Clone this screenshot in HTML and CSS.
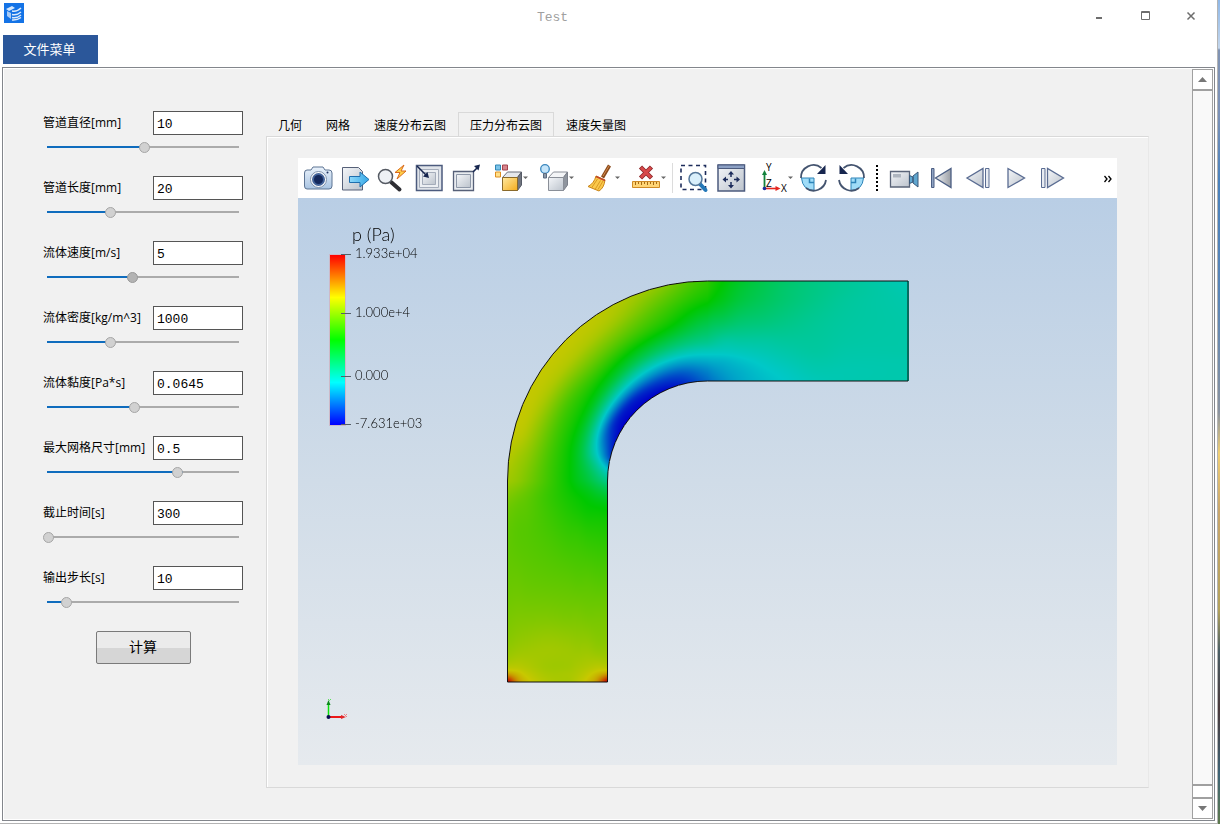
FILE: index.html
```html
<!DOCTYPE html>
<html lang="zh-CN">
<head>
<meta charset="utf-8">
<title>Test</title>
<link rel="stylesheet" href="styles.css">
</head>
<body>
<div class="window">
  <header class="titlebar">
    <svg class="app-icon" width="20" height="20" viewBox="0 0 20 20" aria-hidden="true">
      <rect width="20" height="20" fill="#1473e6"/>
      <path d="M2 6 8 3l3 2-6 3z" fill="#d4e6fb"/><path d="M3 8l4 2v6l-4-3z" fill="#a9cbf5"/>
      <path d="M8 8q5 1 9-3M8 11.500q5 1 9-2.500M8 14.500q5 1 9-2.500M8 17q5 .5 9-2.500" stroke="#dceafb" stroke-width="1.500" fill="none"/>
    </svg>
    <h1 class="title">Test</h1>
    <div class="window-buttons">
      <button class="window-button" type="button" aria-label="最小化"><svg width="12" height="12" viewBox="0 0 12 12"><path d="M3 8h6" stroke="#6d6d6d" stroke-width="2"/></svg></button>
      <button class="window-button" type="button" aria-label="最大化"><svg width="12" height="12" viewBox="0 0 12 12"><path d="M2.500 1.500h8v8h-8zM2 2.500h9" stroke="#6d6d6d" fill="none"/></svg></button>
      <button class="window-button" type="button" aria-label="关闭"><svg width="12" height="12" viewBox="0 0 12 12"><path d="m2.500 2.500 7 7m0-7-7 7" stroke="#6d6d6d" stroke-width="1.500"/></svg></button>
    </div>
  </header>
  <nav class="menubar"><button class="menu-button" type="button">文件菜单</button></nav>

  <div class="frame">
    <main class="content">
      <form class="params">
        <div class="param"><div class="param-head"><label for="p1">管道直径[mm]</label><input class="value" id="p1" type="text" value="10"></div><input class="slider" type="range" aria-label="管道直径" min="0" max="1000" value="509" style="--fill:50.9%"></div>
        <div class="param"><div class="param-head"><label for="p2">管道长度[mm]</label><input class="value" id="p2" type="text" value="20"></div><input class="slider" type="range" aria-label="管道长度" min="0" max="1000" value="329" style="--fill:32.9%"></div>
        <div class="param"><div class="param-head"><label for="p3">流体速度[m/s]</label><input class="value" id="p3" type="text" value="5"></div><input class="slider slider-active" type="range" aria-label="流体速度" min="0" max="1000" value="442" style="--fill:44.2%"></div>
        <div class="param"><div class="param-head"><label for="p4">流体密度[kg/m^3]</label><input class="value" id="p4" type="text" value="1000"></div><input class="slider" type="range" aria-label="流体密度" min="0" max="1000" value="329" style="--fill:32.9%"></div>
        <div class="param"><div class="param-head"><label for="p5">流体黏度[Pa*s]</label><input class="value" id="p5" type="text" value="0.0645"></div><input class="slider" type="range" aria-label="流体黏度" min="0" max="1000" value="456" style="--fill:45.6%"></div>
        <div class="param"><div class="param-head"><label for="p6">最大网格尺寸[mm]</label><input class="value" id="p6" type="text" value="0.5"></div><input class="slider" type="range" aria-label="最大网格尺寸" min="0" max="1000" value="680" style="--fill:68%"></div>
        <div class="param"><div class="param-head"><label for="p7">截止时间[s]</label><input class="value" id="p7" type="text" value="300"></div><input class="slider" type="range" aria-label="截止时间" min="0" max="1000" value="0" style="--fill:0%"></div>
        <div class="param"><div class="param-head"><label for="p8">输出步长[s]</label><input class="value" id="p8" type="text" value="10"></div><input class="slider" type="range" aria-label="输出步长" min="0" max="1000" value="95" style="--fill:9.5%"></div>
        <button class="compute" type="button">计算</button>
      </form>

      <section class="results">
        <div class="tabs" role="tablist">
          <button class="tab" type="button" role="tab">几何</button>
          <button class="tab" type="button" role="tab">网格</button>
          <button class="tab" type="button" role="tab">速度分布云图</button>
          <button class="tab tab-selected" type="button" role="tab" aria-selected="true">压力分布云图</button>
          <button class="tab" type="button" role="tab">速度矢量图</button>
        </div>
        <div class="pane">
          <div class="toolbar">
            <svg class="defs" width="0" height="0" aria-hidden="true">
              <defs>
                <linearGradient id="steel" x1="0" y1="0" x2="1" y2="1"><stop offset="0" stop-color="#f4f6f9"/><stop offset="1" stop-color="#bcc3cc"/></linearGradient>
                <linearGradient id="ice" x1="0" y1="0" x2="0" y2="1"><stop offset="0" stop-color="#eaf2fb"/><stop offset="1" stop-color="#a9c4e2"/></linearGradient>
                <linearGradient id="sky" x1="0" y1="0" x2="1" y2="0"><stop offset="0" stop-color="#8fd8fa"/><stop offset="1" stop-color="#35a8e6"/></linearGradient>
                <linearGradient id="gold" x1="0" y1="0" x2="1" y2="1"><stop offset="0" stop-color="#ffe9a0"/><stop offset="1" stop-color="#f5ac1c"/></linearGradient>
                <linearGradient id="grey" x1="0" y1="0" x2="1" y2="0"><stop offset="0" stop-color="#f2f3f5"/><stop offset="1" stop-color="#999da4"/></linearGradient>
              </defs>
            </svg>
            <button class="tool" type="button" aria-label="截图"><svg width="37" height="40" viewBox="0 0 37 40">
              <path d="M8 12h4l2-3h10l2 3h4q3 0 3 3v13q0 3-3 3H8q-2.500 0-2.500-3V15q0-3 2.500-3z" fill="url(#ice)" stroke="#5d7493"/>
              <circle cx="19.500" cy="21.500" r="8" fill="#fff" stroke="#7d90ab"/><circle cx="19.500" cy="21.500" r="6.500" fill="#44649a"/><circle cx="19.500" cy="21.500" r="4.500" fill="#14285c"/><circle cx="28.500" cy="14.500" r="1" fill="#1b2f60"/></svg></button>
            <button class="tool" type="button" aria-label="导出"><svg width="37" height="40" viewBox="0 0 37 40">
              <path d="M6.500 9.500h16l4 4v18.500h-20z" fill="url(#steel)" stroke="#566078"/>
              <path d="M13.500 18.500H24v-4.500l9 7.500-9 7.500v-4.500H13.500z" fill="url(#sky)" stroke="#1f6fae"/></svg></button>
            <button class="tool" type="button" aria-label="快速查找"><svg width="37" height="40" viewBox="0 0 37 40">
              <path d="m18 24 8.500 7.500" stroke="#2d2d33" stroke-width="4" stroke-linecap="round"/>
              <circle cx="12.500" cy="18.500" r="7" fill="#eef1f5" stroke="#555a63" stroke-width="1.500"/>
              <path d="m31 7-9 7.500h5L24 21l9-8h-5z" fill="#ffd24a" stroke="#d9691c"/></svg></button>
            <button class="tool" type="button" aria-label="重置视图"><svg width="37" height="40" viewBox="0 0 37 40">
              <path d="M6.500 7.500h25.500v25H6.500z" fill="#dfe3e9" stroke="#4c5b7e" stroke-width="1.500"/>
              <path d="M9.500 11.500h19v18h-19z" fill="#eceff3" stroke="#a4acba"/><path d="M12.500 14.500h13v12h-13z" fill="url(#steel)" stroke="#a4acba"/>
              <path d="m7 8 9 9" stroke="#17264f" stroke-width="1.500"/><path d="m19 20-1.500-6-4.500 4.500z" fill="#17264f"/></svg></button>
            <button class="tool" type="button" aria-label="缩放到数据"><svg width="37" height="40" viewBox="0 0 37 40">
              <path d="M6.500 13.500h20v19h-20z" fill="#e9ecf0" stroke="#566078" stroke-width="1.300"/>
              <path d="M9.500 16.500h14v13h-14z" fill="url(#steel)" stroke="#8e98a8"/>
              <path d="m26 14 5-5" stroke="#17264f" stroke-width="1.600"/><path d="m33 6.500-6 1.500 4.500 4.500z" fill="#17264f"/></svg></button>
            <button class="tool tool-menu" type="button" aria-label="显示方块"><svg width="46" height="40" viewBox="0 0 46 40">
              <path d="M11.500 7h5v5h-5z" fill="#7cc3e8" stroke="#2f86b5"/><path d="M18.500 7h5v5h-5z" fill="#d6848c" stroke="#a3424c"/><path d="M11.500 14h5v5h-5z" fill="#ffe08a" stroke="#dd8d20"/>
              <path d="m18.500 19.500 5-5.500h14l-4 5.500z" fill="#e5e8ec" stroke="#6a6f7a"/><path d="m33.500 19.500 4-5.500v13l-4 5.500z" fill="#71757f" stroke="#555a66"/><path d="M18.500 19.500h15v13h-15z" fill="url(#gold)" stroke="#8a6a2a"/>
              <path d="M39 18.500h5L41.500 21z" fill="#666"/></svg></button>
            <button class="tool tool-menu" type="button" aria-label="光照"><svg width="46" height="40" viewBox="0 0 46 40">
              <path d="m18.500 19.500 5-5.500h14l-4 5.500z" fill="#f4f5f7" stroke="#8a8f98"/><path d="m33.500 19.500 4-5.500v13l-4 5.500z" fill="#8f959e" stroke="#7b808a"/><path d="M18.500 19.500h15v13h-15z" fill="url(#steel)" stroke="#8a8f98"/>
              <circle cx="15" cy="11" r="4.300" fill="#c5e5fa" stroke="#3a86bd" stroke-width="1.300"/><path d="M13.500 15.500h3V20h-3z" fill="#8c98a8" stroke="#5a6b80"/>
              <path d="M39 18.500h5L41.500 21z" fill="#666"/></svg></button>
            <button class="tool tool-menu" type="button" aria-label="清除"><svg width="46" height="40" viewBox="0 0 46 40">
              <path d="m33.500 7.500-7 12" stroke="#8a4b1d" stroke-width="3.500"/><path d="m33 8-6 10" stroke="#d68a4a"/>
              <path d="m20 18 9 4q-1 8-6 11l-11-4.500q6-3 8-10.500z" fill="#fbc94c" stroke="#c98518"/><path d="m21.500 21-6 9m9-7.500-5.500 9m8-8.500-5 8.500" stroke="#d99a24"/><path d="m20 18.500 9 4" stroke="#c2442a" stroke-width="1.500"/>
              <path d="M39 18.500h5L41.500 21z" fill="#666"/></svg></button>
            <button class="tool tool-menu" type="button" aria-label="删除标尺"><svg width="46" height="40" viewBox="0 0 46 40">
              <path d="m18.500 9 11 11m0-11-11 11" stroke="#8e2a2c" stroke-width="4.500"/><path d="m19 9.500 10 10m0-10-10 10" stroke="#d8494a" stroke-width="2.800"/>
              <path d="M10.500 23.500h27v6h-27z" fill="#ffd576" stroke="#cf8a25"/><path d="M13.500 24v3m3-3v2m3-2v3m3-3v2m3-2v3m3-3v2m3-2v3m3-3v2" stroke="#a56a14"/>
              <path d="M39 18.500h5L41.500 21z" fill="#666"/></svg></button>
            <span class="separator"></span>
            <button class="tool" type="button" aria-label="框选缩放"><svg width="37" height="40" viewBox="0 0 37 40">
              <path d="M7 7.500h24.500v24H7z" fill="none" stroke="#1d2c5b" stroke-width="1.600" stroke-dasharray="4 3.500"/>
              <path d="m26 26 5.500 6" stroke="#2478b8" stroke-width="4" stroke-linecap="round"/><circle cx="21.500" cy="21" r="6.500" fill="#d9effb" stroke="#54779a" stroke-width="1.500"/></svg></button>
            <button class="tool" type="button" aria-label="适应窗口"><svg width="37" height="40" viewBox="0 0 37 40">
              <path d="M7 7h26.500v26H7z" fill="url(#steel)" stroke="#4c5b7e" stroke-width="1.500"/><path d="M7 7h26.500v3.500H7z" fill="#8ca0c4" stroke="#4c5b7e"/>
              <path d="M20 15v4m0 5v4m-7-6.500h4m6 0h4" stroke="#1d2c5b" stroke-width="1.500"/><path d="m20 13-3 3.500h6zM20 30.500 17 27h6zM11.500 21.500 15 18.500v6zM29 21.500l-3.500-3v6z" fill="#1d2c5b"/></svg></button>
            <button class="tool tool-menu" type="button" aria-label="坐标轴视图"><svg width="46" height="40" viewBox="0 0 46 40">
              <path d="M16.500 30V15" stroke="#12823b" stroke-width="1.800"/><path d="m16.500 12-2.500 5h5z" fill="#12823b"/><path d="M17 30.500h12" stroke="#e52620" stroke-width="1.600"/><path d="m32.500 30.500-5-2.500v5z" fill="#e52620"/><circle cx="16.500" cy="30.500" r="1.800" fill="#1c2f9c"/>
              <text class="axis-letter" x="18" y="13">Y</text><text class="axis-letter" x="18" y="29">Z</text><text class="axis-letter" x="33" y="34">X</text>
              <path d="M40 18.500h5L42.500 21z" fill="#666"/></svg></button>
            <button class="tool" type="button" aria-label="顺时针旋转"><svg width="37" height="40" viewBox="0 0 37 40">
              <path d="M7.500 20H20v12.500Q8.500 32 7.500 20z" fill="#9fdcf8" stroke="#2e84b8"/><path d="M15.500 20.500v4H20" fill="none" stroke="#2e84b8" stroke-width="1.500"/>
              <path d="M27.500 10A12.500 12.500 0 0 0 7 20M12 30A12.500 12.500 0 0 0 32 22" fill="none" stroke="#44546f" stroke-width="1.800"/><path d="M31.500 7v9H23z" fill="#17264f"/></svg></button>
            <button class="tool" type="button" aria-label="逆时针旋转"><svg width="37" height="40" viewBox="0 0 37 40">
              <path d="M32.500 20H20v12.500Q31.500 32 32.500 20z" fill="#9fdcf8" stroke="#2e84b8"/><path d="M24.500 20.500v4H20" fill="none" stroke="#2e84b8" stroke-width="1.500"/>
              <path d="M12.500 10A12.500 12.500 0 0 1 33 20M28 30A12.500 12.500 0 0 1 8 22" fill="none" stroke="#44546f" stroke-width="1.800"/><path d="M8.500 7v9H17z" fill="#17264f"/></svg></button>
            <span class="grip"></span>
            <button class="tool" type="button" aria-label="录制"><svg width="37" height="40" viewBox="0 0 37 40">
              <path d="M6.500 13.500h19v15.500h-19z" fill="url(#steel)" stroke="#5a6478" stroke-width="1.300"/><path d="M9 16h8v3.500H9z" fill="#aeb5bf"/>
              <path d="M25.500 17.500 29 19v5l-3.500 1.500zM34 14v15l-5-4v-7z" fill="#5fa6cf" stroke="#3a5878"/></svg></button>
            <button class="tool" type="button" aria-label="第一帧"><svg width="37" height="40" viewBox="0 0 37 40">
              <path d="M10.500 10.500H13v19h-2.500z" fill="#8fa3c2" stroke="#4c5f84"/><path d="M30 10.500v19L14.500 20z" fill="url(#grey)" stroke="#4c5f84" stroke-width="1.300"/></svg></button>
            <button class="tool" type="button" aria-label="上一帧"><svg width="37" height="40" viewBox="0 0 37 40">
              <path d="M25 10.500v19L9 20z" fill="url(#steel)" stroke="#5a6c92" stroke-width="1.300"/><path d="M27.500 10.500H31v19h-3.500z" fill="#e8ecf2" stroke="#5a6c92"/></svg></button>
            <button class="tool" type="button" aria-label="播放"><svg width="37" height="40" viewBox="0 0 37 40">
              <path d="M13 10.500v19L29.500 20z" fill="url(#steel)" stroke="#5a6c92" stroke-width="1.300"/></svg></button>
            <button class="tool" type="button" aria-label="下一帧"><svg width="37" height="40" viewBox="0 0 37 40">
              <path d="M15.500 10.500v19l16-9.500z" fill="url(#steel)" stroke="#5a6c92" stroke-width="1.300"/><path d="M9.500 10.500H13v19H9.500z" fill="#e8ecf2" stroke="#5a6c92"/></svg></button>
            <button class="tool-overflow" type="button" aria-label="更多工具"><svg width="10" height="8" viewBox="0 0 10 8"><path d="m1.500 1 2.500 3-2.500 3M5.500 1 8 4 5.500 7" fill="none" stroke="#000" stroke-width="1.300"/></svg></button>
          </div>

          <div class="viewport">
            <canvas class="field" id="field" width="402" height="402"></canvas>
            <svg class="overlay" aria-label="压力分布 p (Pa)">
              <defs><linearGradient id="rainbow" x1="0" y1="0" x2="0" y2="1">
                <stop offset="0" stop-color="#f00"/><stop offset=".25" stop-color="#ff0"/><stop offset=".5" stop-color="#0f0"/><stop offset=".75" stop-color="#0ff"/><stop offset="1" stop-color="#00f"/>
              </linearGradient></defs>
              <path d="M209.500 484V283A200 200 0 0 1 409.500 83H610V183H409.500A100 100 0 0 0 309.500 283V484z" fill="none" stroke="#111"/>
              <rect x="31" y="56" width="17" height="172" fill="#cdb9c8"/>
              <rect x="32" y="57" width="15" height="170" fill="url(#rainbow)"/>
              <path d="M43 56.500h10M43 115.500h10M43 178.500h10M43 226.500h10" stroke="#555f69"/>
              <text class="legend-title" x="54" y="43">p (Pa)</text>
              <text class="legend-label" x="57" y="60">1.933e+04</text>
              <text class="legend-label" x="57" y="119">1.000e+4</text>
              <text class="legend-label" x="57" y="182">0.000</text>
              <text class="legend-label" x="57" y="230">-7.631e+03</text>
              <path d="M30.500 519v-13" stroke="#0be00b" stroke-width="1.500"/><path d="m30.500 502-2 5h4z" fill="#0a8a1a"/>
              <path d="M31 519h13" stroke="#e00" stroke-width="1.800"/><path d="m48 519-5-2v4z" fill="#e0272a"/>
              <circle cx="30.500" cy="519" r="2" fill="#0a0a50"/><path d="m46 516 3 3m0-3-3 3" stroke="#f08080"/><path d="m30 501 1.500 1.500L33 501" stroke="#5de05d" fill="none"/>
            </svg>
          </div>
        </div>
      </section>
    </main>
    <div class="scrollbar" aria-hidden="true">
      <div class="scroll-button"><svg width="9" height="5" viewBox="0 0 9 5"><path d="M0 5h9L4.500 0z" fill="#777"/></svg></div>
      <div class="scroll-track"></div>
      <div class="scroll-thumb"></div>
      <div class="scroll-button"><svg width="9" height="5" viewBox="0 0 9 5"><path d="M0 0h9L4.500 5z" fill="#777"/></svg></div>
    </div>
  </div>
</div>
<script src="field.js"></script>
</body>
</html>
```
FILE: styles.css
```css
* { box-sizing: border-box; }

body {
  margin: 0;
  min-height: 100vh;
  padding-right: 2px;
  display: flex;
  background: linear-gradient(#8fb8e8 0, #c3d6ec 48px, #8093b3 50px, #7c92b8 14%, #4a82bd 22%, #5a86b8 36%, #8a93a0 50%, #f0cf74 55%, #c9a66c 62%, #b3a25c 74%, #4b5f66 79%, #4b3a3c 86%, #3f6577 94%, #5e7a4c 100%);
  font-family: "Open Sans", "Noto Sans CJK SC", sans-serif;
  font-size: 12px;
  color: #000;
}

button, input {
  margin: 0;
  font: inherit;
  color: inherit;
}

.window {
  flex: 1;
  min-width: 0;
  display: flex;
  flex-direction: column;
  background: #fff;
  border-right: 1px solid #b4b4b4;
  border-bottom: 1px solid #b4b4b4;
}

/* Title bar and menu */
.titlebar {
  height: 35px;
  display: grid;
  grid-template-columns: 1fr auto 1fr;
  align-items: center;
}

.app-icon {
  align-self: start;
  margin: 3px 0 0 4px;
}

.title {
  margin: 0;
  padding-right: 112px;
  font: 13px "Liberation Mono", monospace;
  color: #a0a0a0;
}

.window-buttons {
  display: flex;
  justify-content: flex-end;
  padding-right: 3px;
}

.window-button {
  width: 46px;
  height: 32px;
  padding: 0;
  border: 0;
  background: none;
}

.menubar { padding-left: 3px; }

.menu-button {
  display: block;
  width: 95px;
  height: 29px;
  padding: 0 2px 2px 0;
  border: 0;
  background: #2b579a;
  color: #fff;
  font-size: 13px;
}

/* Scrollable frame */
.frame {
  flex: 1;
  display: flex;
  margin: 3px 2px 2px;
  padding: 1px;
  border: 1px solid #83868c;
  background: #fff;
}

.content {
  flex: 1;
  min-width: 0;
  display: flex;
  gap: 23px;
  padding: 42px 43px 31px 39px;
  background: #f1f1f1;
}

.scrollbar {
  width: 21px;
  display: flex;
  flex-direction: column;
}

.scrollbar > * {
  border: 1px solid #a0a0a0;
  background: #fff;
}

.scroll-button {
  height: 21px;
  display: flex;
  align-items: center;
  justify-content: center;
}

.scrollbar > .scroll-track {
  flex: 1;
  background: #f9f9f9;
}

.scroll-thumb { height: 13px; }

/* Parameter form */
.params {
  width: 200px;
  display: flex;
  flex-direction: column;
  gap: 23px;
}

.param {
  display: flex;
  flex-direction: column;
  gap: 7px;
}

.param-head {
  display: flex;
  justify-content: space-between;
  align-items: center;
  white-space: nowrap;
}

.param-head label { padding-bottom: 2px; }

.value {
  width: 90px;
  height: 24px;
  padding: 2px 3px 0;
  border: 1px solid #555;
  background: #fff;
  font: 13px "Liberation Mono", monospace;
}

.slider {
  appearance: none;
  width: 100%;
  height: 11px;
  border: 0;
  background:
    linear-gradient(#0f6cbd 0 0) 4px 4px / var(--fill) 2px no-repeat,
    linear-gradient(#ababab 0 0) 4px 4px / calc(100% - 8px) 2px no-repeat;
}

.slider::-webkit-slider-thumb {
  appearance: none;
  width: 11px;
  height: 11px;
  border: 1px solid #a6a6a6;
  border-radius: 50%;
  background: #d1d1d1;
}

.slider-active::-webkit-slider-thumb {
  border-color: #999;
  background: #b3b3b3;
}

.compute {
  align-self: center;
  width: 95px;
  height: 33px;
  padding: 0 0 3px;
  border: 1px solid #7a7a7a;
  border-radius: 2px;
  background: linear-gradient(#ebebeb 50%, #d6d6d6 50%);
  font-size: 14px;
}

/* Tabs and result pane */
.results {
  flex: 1;
  min-width: 0;
  display: flex;
  flex-direction: column;
}

.tabs {
  display: flex;
  padding-top: 1px;
}

.tab {
  height: 24px;
  padding: 1px 11px 0;
  border: 1px solid transparent;
  border-bottom: 0;
  background: none;
}

.tab-selected { border-color: #d9d9d9; }

.pane {
  flex: 1;
  display: flex;
  flex-direction: column;
  padding: 21px 31px 22px;
  border: 1px solid #d9d9d9;
  border-right-color: #e8e8e8;
  box-shadow: inset 1px 1px #fff;
}

.toolbar {
  height: 40px;
  display: flex;
  align-items: center;
  padding: 0 4px 0 1px;
  background: #fff;
}

.defs { position: absolute; }

.tool {
  flex: none;
  width: 37px;
  height: 40px;
  padding: 0;
  border: 0;
  background: none;
}

.tool svg { display: block; }

.tool-menu { width: 46px; }

.axis-letter { font: 10px "Open Sans", sans-serif; }

.separator {
  flex: none;
  width: 1px;
  height: 30px;
  margin: 0 1px 0 4px;
  background: #dcdcdc;
}

.grip {
  flex: none;
  width: 2px;
  height: 26px;
  margin: 0 6px 0 8px;
  background: repeating-linear-gradient(#000 0 2px, transparent 2px 4px);
}

.tool-overflow {
  margin-left: auto;
  padding: 0;
  border: 0;
  background: none;
}

/* 3D view: geometry and annotations sit freely over the backdrop */
.viewport {
  flex: 1;
  position: relative;
  overflow: hidden;
  background: linear-gradient(#b9cee5, #d0dce8 50%, #e6eaee);
}

.field {
  position: absolute;
  left: 209px;
  top: 82px;
}

.overlay {
  position: absolute;
  inset: 0;
  width: 100%;
  height: 100%;
}

.legend-title { font: 300 18px Lato, sans-serif; }

.legend-label { font: 300 13px Lato, sans-serif; }
```
FILE: field.js
```js
// Pressure field of the bent pipe, normalised to 0..1, sampled on a
// grid of stations along the pipe (rows) and positions across it (columns).
const across = [0, 0.1, 0.2, 0.4, 0.6, 0.7, 0.8, 0.9, 1];
// Station: 0..200 inlet leg, 200..290 bend (degrees), 290..490 outlet leg.
const rows = [
  [0,   1.00, 0.82, 0.76, 0.72, 0.71, 0.73, 0.76, 0.82, 1.00],
  [7,   0.81, 0.77, 0.74, 0.71, 0.71, 0.72, 0.74, 0.77, 0.81],
  [14,  0.73, 0.73, 0.72, 0.70, 0.70, 0.71, 0.72, 0.73, 0.73],
  [33,  0.68, 0.69, 0.695, 0.70, 0.695, 0.69, 0.69, 0.68, 0.68],
  [66,  0.65, 0.655, 0.655, 0.655, 0.65, 0.65, 0.645, 0.645, 0.645],
  [100, 0.63, 0.63, 0.625, 0.62, 0.615, 0.61, 0.61, 0.605, 0.605],
  [144, 0.62, 0.61, 0.605, 0.59, 0.57, 0.565, 0.555, 0.55, 0.545],
  [171, 0.635, 0.62, 0.61, 0.575, 0.54, 0.525, 0.51, 0.505, 0.50],
  [185, 0.66, 0.64, 0.62, 0.57, 0.525, 0.505, 0.485, 0.46, 0.44],
  [200, 0.70, 0.68, 0.65, 0.58, 0.51, 0.47, 0.43, 0.38, 0.33],
  [207, 0.725, 0.70, 0.67, 0.585, 0.505, 0.45, 0.385, 0.31, 0.23],
  [215, 0.745, 0.73, 0.69, 0.59, 0.495, 0.42, 0.31, 0.20, 0.07],
  [230, 0.745, 0.735, 0.705, 0.59, 0.485, 0.38, 0.23, 0.07, 0.00],
  [245, 0.745, 0.735, 0.71, 0.60, 0.455, 0.34, 0.20, 0.05, 0.00],
  [260, 0.73, 0.715, 0.68, 0.57, 0.41, 0.30, 0.19, 0.07, 0.00],
  [275, 0.68, 0.64, 0.60, 0.515, 0.37, 0.28, 0.19, 0.10, 0.04],
  [290, 0.56, 0.54, 0.51, 0.42, 0.33, 0.27, 0.215, 0.165, 0.13],
  [307, 0.495, 0.48, 0.46, 0.39, 0.30, 0.265, 0.225, 0.20, 0.18],
  [323, 0.45, 0.435, 0.42, 0.365, 0.30, 0.27, 0.24, 0.22, 0.21],
  [347, 0.40, 0.395, 0.385, 0.35, 0.30, 0.28, 0.26, 0.245, 0.235],
  [367, 0.37, 0.365, 0.36, 0.335, 0.305, 0.29, 0.275, 0.26, 0.25],
  [397, 0.335, 0.335, 0.33, 0.315, 0.305, 0.30, 0.29, 0.28, 0.27],
  [430, 0.31, 0.31, 0.305, 0.30, 0.295, 0.29, 0.285, 0.28, 0.28],
  [490, 0.27, 0.28, 0.285, 0.29, 0.29, 0.29, 0.285, 0.285, 0.285]
];
const stations = rows.map(r => r[0]);
const table = rows.map(r => r.slice(1));

// Cubic Hermite interpolation on an uneven grid.
function cubic(xs, get, x) {
  const n = xs.length;
  let i = 0;
  while (i < n - 2 && x > xs[i + 1]) i++;
  const h = xs[i + 1] - xs[i];
  const k = (x - xs[i]) / h;
  const a = get(i), b = get(i + 1);
  const slope = (b - a) / h;
  const m0 = i > 0 ? (b - get(i - 1)) / (xs[i + 1] - xs[i - 1]) : slope;
  const m1 = i < n - 2 ? (get(i + 2) - a) / (xs[i + 2] - xs[i]) : slope;
  const k2 = k * k, k3 = k2 * k;
  return (2 * k3 - 3 * k2 + 1) * a + (k3 - 2 * k2 + k) * h * m0 +
    (3 * k2 - 2 * k3) * b + (k3 - k2) * h * m1;
}

function colour(v) {
  const c = Math.max(0, Math.min(1, v)) * 4;
  const ramp = [[0, 0, 200], [0, 200, 200], [0, 200, 0], [200, 200, 0], [200, 0, 0]];
  const i = Math.min(3, Math.floor(c));
  return ramp[i].map((from, n) => from + (ramp[i + 1][n] - from) * (c - i));
}

const context = document.getElementById("field").getContext("2d");
const image = context.createImageData(402, 402);
const centre = 200.5;
for (let py = 0; py < 402; py++) {
  for (let px = 0; px < 402; px++) {
    const dx = centre - (px + 0.5);
    const dy = centre + 0.5 - (py + 0.5);
    let station, t;
    if (dy < 0) {
      station = 200 + dy;
      t = (200 - dx) / 100;
    } else if (dx < 0) {
      station = 290 - dx;
      t = (200 - dy) / 100;
    } else {
      station = 200 + Math.atan2(dy, dx) * 180 / Math.PI;
      t = (200 - Math.hypot(dx, dy)) / 100;
    }
    if (t < 0 || t > 1 || station < -1 || station > 491) continue;
    station = Math.max(0, Math.min(490, station));
    const v = cubic(stations, i => cubic(across, j => table[i][j], t), station);
    const [r, g, b] = colour(v);
    image.data.set([r, g, b, 255], (py * 402 + px) * 4);
  }
}
context.putImageData(image, 0, 0);
```
